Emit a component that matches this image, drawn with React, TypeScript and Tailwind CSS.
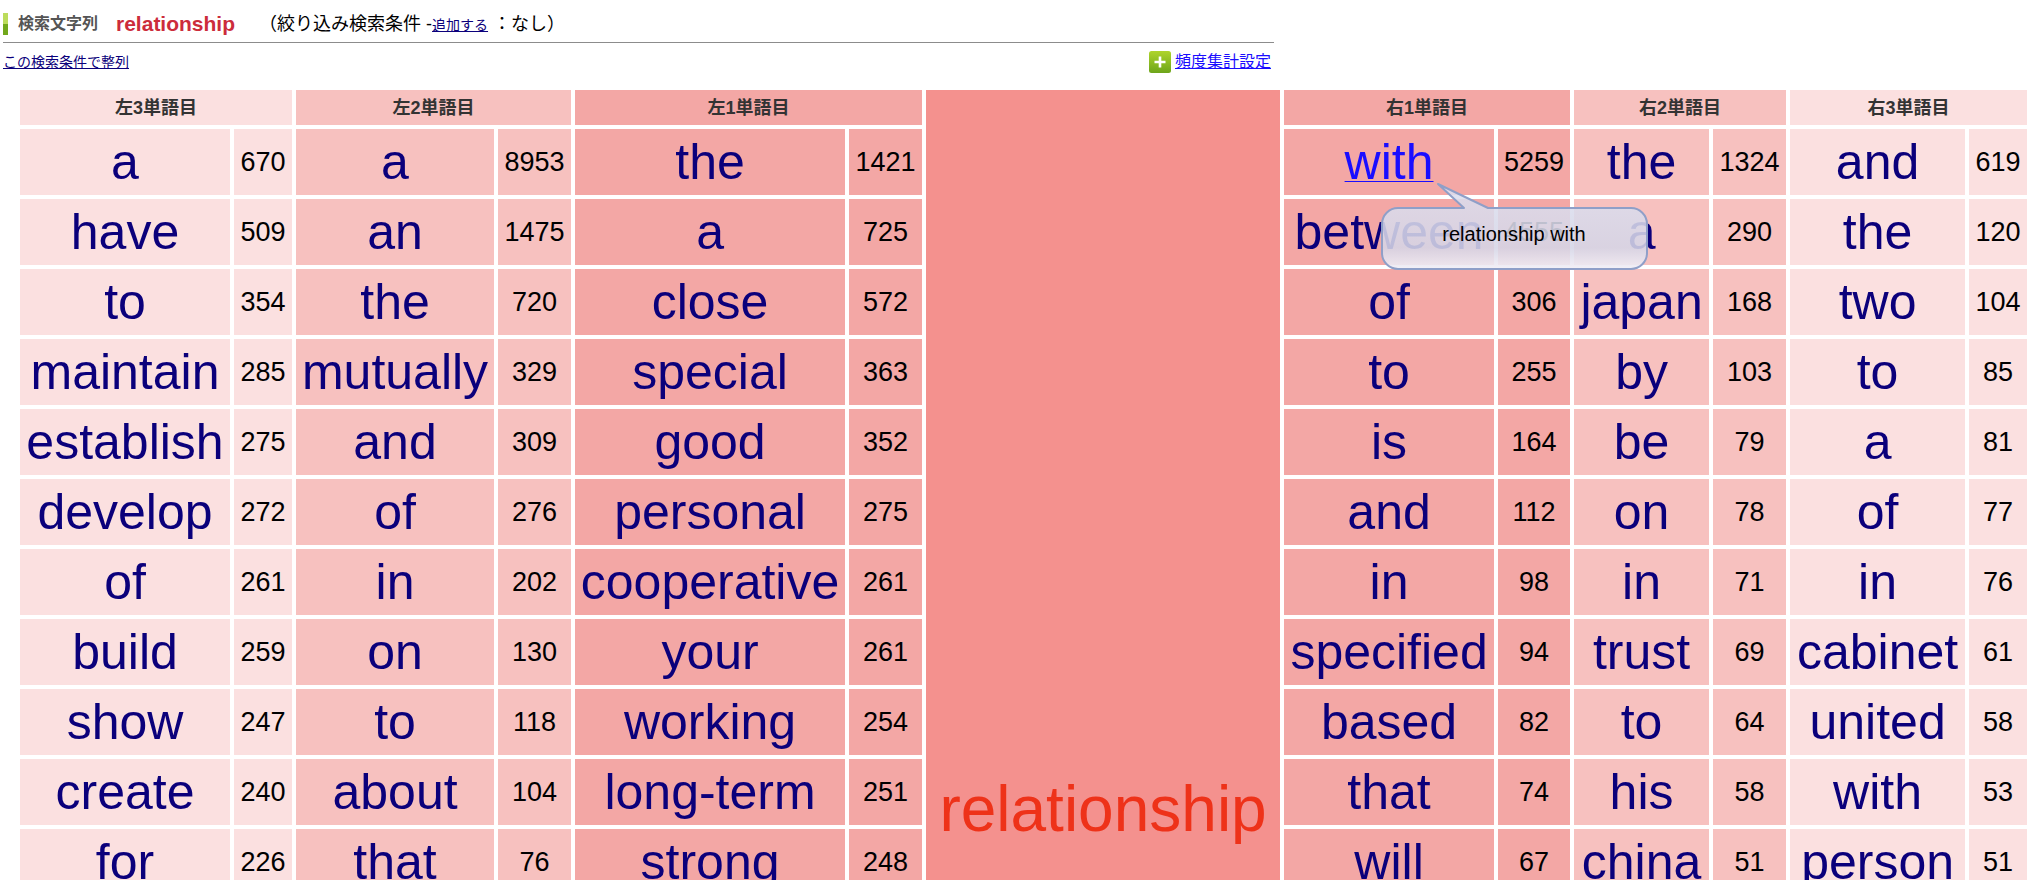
import React from 'react';

interface Entry {
  word: string;
  count: number;
}

interface Column {
  title: string;
  tone: string;
  entries: Entry[];
}

const toEntries = (words: string[], counts: number[]): Entry[] =>
  words.map((word, i) => ({ word, count: counts[i] }));

const LIGHT = 'bg-[#fbe0e0]';
const MIDDLE = 'bg-[#f7c1bf]';
const STRONG = 'bg-[#f3a7a5]';

const leftColumns: Column[] = [
  {
    title: '左3単語目',
    tone: LIGHT,
    entries: toEntries(
      ['a', 'have', 'to', 'maintain', 'establish', 'develop', 'of', 'build', 'show', 'create', 'for'],
      [670, 509, 354, 285, 275, 272, 261, 259, 247, 240, 226],
    ),
  },
  {
    title: '左2単語目',
    tone: MIDDLE,
    entries: toEntries(
      ['a', 'an', 'the', 'mutually', 'and', 'of', 'in', 'on', 'to', 'about', 'that'],
      [8953, 1475, 720, 329, 309, 276, 202, 130, 118, 104, 76],
    ),
  },
  {
    title: '左1単語目',
    tone: STRONG,
    entries: toEntries(
      ['the', 'a', 'close', 'special', 'good', 'personal', 'cooperative', 'your', 'working', 'long-term', 'strong'],
      [1421, 725, 572, 363, 352, 275, 261, 261, 254, 251, 248],
    ),
  },
];

const rightColumns: Column[] = [
  {
    title: '右1単語目',
    tone: STRONG,
    entries: toEntries(
      ['with', 'between', 'of', 'to', 'is', 'and', 'in', 'specified', 'based', 'that', 'will'],
      [5259, 4555, 306, 255, 164, 112, 98, 94, 82, 74, 67],
    ),
  },
  {
    title: '右2単語目',
    tone: MIDDLE,
    entries: toEntries(
      ['the', 'a', 'japan', 'by', 'be', 'on', 'in', 'trust', 'to', 'his', 'china'],
      [1324, 290, 168, 103, 79, 78, 71, 69, 64, 58, 51],
    ),
  },
  {
    title: '右3単語目',
    tone: LIGHT,
    entries: toEntries(
      ['and', 'the', 'two', 'to', 'a', 'of', 'in', 'cabinet', 'united', 'with', 'person'],
      [619, 120, 104, 85, 81, 77, 76, 61, 58, 53, 51],
    ),
  },
];

const ROW_COUNT = 11;

const Balloon: React.FC<{ text: string }> = ({ text }) => (
  <div role="tooltip" className="absolute top-12 left-24 z-10 w-[268px] h-[88px] pointer-events-none">
    <svg className="absolute inset-0 w-full h-full" viewBox="0 0 268 88" fill="none">
      <defs>
        <linearGradient id="balloon" x1="0" y1="0" x2="0" y2="1">
          <stop offset="0" stopColor="#dde0f0" stopOpacity="0.88" />
          <stop offset="0.75" stopColor="#d5d5e6" stopOpacity="0.88" />
          <stop offset="1" stopColor="#f2eff6" stopOpacity="0.92" />
        </linearGradient>
      </defs>
      <path
        d="M18 26H84L58 2L108 26H251a16 16 0 0 1 16 16V71a16 16 0 0 1-16 16H18a16 16 0 0 1-16-16V42a16 16 0 0 1 16-16Z"
        fill="url(#balloon)"
        stroke="#8f9fc8"
        strokeWidth="2"
        strokeLinejoin="round"
      />
    </svg>
    <span className="relative block pt-10 text-center text-[20px] leading-6 text-black">{text}</span>
  </div>
);

const EntryCells: React.FC<{ column: Column; row: number; active?: boolean }> = ({ column, row, active }) => {
  const { word, count } = column.entries[row];
  return (
    <>
      <td className={`h-[66px] p-0 text-center text-[50px] leading-[56px] ${column.tone}`}>
        <div className="relative">
          <a href="#" className={active ? 'text-[#1a0dff] underline decoration-1 underline-offset-2' : 'text-[#0b007b]'}>
            {word}
          </a>
          {active && <Balloon text="relationship with" />}
        </div>
      </td>
      <td className={`p-0 text-center text-[27px] leading-8 text-black ${column.tone}`}>{count}</td>
    </>
  );
};

const HeaderCell: React.FC<{ column: Column }> = ({ column }) => (
  <th colSpan={2} scope="colgroup" className={`h-[35px] p-0 text-[18px] leading-6 font-bold text-[#333] ${column.tone}`}>
    {column.title}
  </th>
);

const App: React.FC = () => {
  return (
    <div className="h-screen overflow-hidden bg-white text-black font-['Liberation_Sans','Noto_Sans_CJK_JP',sans-serif]">
      <header className="ml-[3px] w-[1271px] max-w-full">
        <div className="flex items-center h-[43px] pt-1.5 border-b border-[#8c8c8c] text-[18px] leading-6">
          <span className="shrink-0 w-[5px] h-[22px] bg-linear-to-b from-[#bcdc5c] from-50% to-[#72a81c] to-50%" />
          <h1 className="flex items-center">
            <span className="ml-2.5 text-[16px] font-bold text-[#555]">検索文字列</span>
            <span className="ml-[18px] text-[21px] font-bold text-[#cc2c3b]">relationship</span>
          </h1>
          <p className="ml-6">
            （絞り込み検索条件 -
            <a href="#" className="text-[14px] text-[#0b007b] underline">追加する</a>
            {' '}：なし）
          </p>
        </div>
        <div className="flex items-center justify-between h-[38px] pr-[3px]">
          <a href="#" className="text-[14px] text-[#0b007b] underline">この検索条件で整列</a>
          <a href="#" className="flex items-center gap-1 text-[16px] text-[#1a0dff] underline">
            <svg className="w-[22px] h-[22px]" viewBox="0 0 22 22">
              <defs>
                <linearGradient id="plus" x1="0" y1="0" x2="0" y2="1">
                  <stop offset="0" stopColor="#afd42c" />
                  <stop offset="1" stopColor="#6da51b" />
                </linearGradient>
              </defs>
              <rect width="22" height="22" rx="2.5" fill="url(#plus)" />
              <path d="M11 5.5v11M5.5 11h11" stroke="#fff" strokeWidth="2.6" />
            </svg>
            頻度集計設定
          </a>
        </div>
      </header>

      <table className="ml-4 mt-[5px] w-[2015px] table-fixed border-separate border-spacing-1">
        <colgroup>
          <col className="w-[210px]" />
          <col className="w-[58px]" />
          <col className="w-[198px]" />
          <col className="w-[73px]" />
          <col className="w-[270px]" />
          <col className="w-[73px]" />
          <col className="w-[354px]" />
          <col className="w-[210px]" />
          <col className="w-[72px]" />
          <col className="w-[135px]" />
          <col className="w-[73px]" />
          <col className="w-[175px]" />
          <col className="w-[58px]" />
        </colgroup>
        <tbody>
          <tr>
            {leftColumns.map((column) => (
              <HeaderCell key={column.title} column={column} />
            ))}
            <td rowSpan={ROW_COUNT + 1} className="p-0 pb-[50px] align-bottom text-center text-[64px] leading-[72px] text-[#ee3219] bg-[#f4918e]">
              relationship
            </td>
            {rightColumns.map((column) => (
              <HeaderCell key={column.title} column={column} />
            ))}
          </tr>
          {Array.from({ length: ROW_COUNT }, (_, row) => (
            <tr key={row}>
              {leftColumns.map((column) => (
                <EntryCells key={column.title} column={column} row={row} />
              ))}
              {rightColumns.map((column, i) => (
                <EntryCells key={column.title} column={column} row={row} active={row === 0 && i === 0} />
              ))}
            </tr>
          ))}
        </tbody>
      </table>
    </div>
  );
};

export default App;
